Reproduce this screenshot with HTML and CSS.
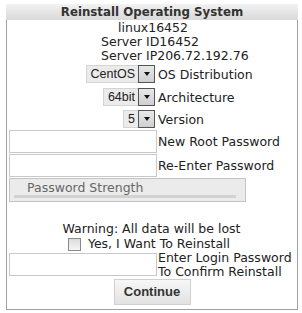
FILE: index.html
```html
<!DOCTYPE html>
<html>
<head>
<meta charset="utf-8">
<link rel="stylesheet" href="styles.css">
</head>
<body>
<div class="panel">
  <div class="panel-head">Reinstall Operating System</div>
  <div class="panel-body">
    <div class="info center">linux16452</div>
    <div class="info server">Server ID16452</div>
    <div class="info server">Server IP206.72.192.76</div>

    <div class="form-grid">
      <div class="cell-r"><span class="select"><span class="sel-text">CentOS</span><span class="sel-btn"><span class="arrow"></span></span></span></div>
      <div class="lbl">OS Distribution</div>

      <div class="cell-r"><span class="select"><span class="sel-text">64bit</span><span class="sel-btn"><span class="arrow"></span></span></span></div>
      <div class="lbl">Architecture</div>

      <div class="cell-r"><span class="select"><span class="sel-text">5</span><span class="sel-btn"><span class="arrow"></span></span></span></div>
      <div class="lbl">Version</div>

      <div class="cell-r"><span class="input"></span></div>
      <div class="lbl">New Root Password</div>

      <div class="cell-r"><span class="input"></span></div>
      <div class="lbl">Re-Enter Password</div>
    </div>

    <div class="strength"><span class="strength-text">Password Strength</span><span class="strength-bar"></span></div>

    <div class="warning">Warning: All data will be lost</div>
    <div class="confirm"><span class="checkbox"></span><span>Yes, I Want To Reinstall</span></div>

    <div class="login-row">
      <span class="input"></span>
      <div class="lbl-multi">Enter Login Password<br>To Confirm Reinstall</div>
    </div>

    <div class="actions"><span class="button">Continue</span></div>
  </div>
</div>
</body>
</html>
```
FILE: styles.css
```css
html, body {
  margin: 0;
  padding: 0;
  background: #fff;
}
body {
  font-family: "DejaVu Sans", Verdana, sans-serif;
  font-size: 12.5px;
  color: #222;
}
.panel {
  width: 292px;
  margin: 4px 0 0 6px;
}
.panel-head {
  height: 16px;
  line-height: 16px;
  text-align: center;
  font-weight: bold;
  font-size: 11.8px;
  color: #333;
  background: linear-gradient(#f2f2f2, #d9d9d9);
}
.panel-body {
  border: 1px solid #a0a0a0;
  border-top: none;
  padding: 1px 0 0 2px;
  height: 290px;
  box-sizing: border-box;
}
.info {
  height: 14px;
  line-height: 14px;
}
.center {
  text-align: center;
}
.server {
  padding-left: 92px;
}
.form-grid {
  display: grid;
  grid-template-columns: 148px 1fr;
  grid-template-rows: 22px 24px 20px 24px 24px;
  column-gap: 1px;
}
.cell-r {
  display: flex;
  justify-content: flex-end;
  align-items: center;
}
.lbl {
  display: flex;
  align-items: center;
  white-space: nowrap;
}
.select {
  display: flex;
  height: 18px;
  margin-right: 2px;
}
.sel-text {
  background: #ebebeb;
  border: 1px solid #d4d4d4;
  border-right: none;
  font-family: "Liberation Sans", Arial, sans-serif;
  font-size: 12.5px;
  line-height: 16px;
  padding: 0 3px 0 4px;
  color: #222;
}
.sel-btn {
  width: 15px;
  height: 16px;
  border: 1px solid #555;
  background: linear-gradient(#e8e8e8, #cfcfcf);
  display: flex;
  align-items: center;
  justify-content: center;
}
.arrow {
  width: 0;
  height: 0;
  border-left: 3.5px solid transparent;
  border-right: 3.5px solid transparent;
  border-top: 4px solid #111;
}
.input {
  display: block;
  width: 146px;
  height: 21px;
  border: 1px solid #c8c8c8;
  background: #fff;
  flex: none;
}
.strength {
  position: relative;
  width: 237px;
  height: 24px;
  border: 1px solid #c4c4c4;
  background: #ebebeb;
  margin-top: 1px;
  box-sizing: border-box;
}
.strength-text {
  display: block;
  padding-left: 17px;
  line-height: 18px;
  color: #666;
}
.strength-bar {
  position: absolute;
  left: 4px;
  right: 9px;
  bottom: 3px;
  height: 3px;
  background: #d2d2d2;
}
.warning {
  text-align: center;
  margin-top: 19px;
  line-height: 15px;
  padding-right: 3px;
}
.confirm {
  display: flex;
  justify-content: center;
  align-items: center;
  gap: 7px;
  line-height: 16px;
  padding-right: 8px;
}
.checkbox {
  width: 11px;
  height: 11px;
  border: 1px solid #8a8a8a;
  background: linear-gradient(#dcdcdc, #f6f6f6);
}
.login-row {
  display: flex;
  align-items: flex-start;
  gap: 1px;
  margin-top: 1px;
}
.lbl-multi {
  line-height: 14px;
  white-space: nowrap;
  margin-top: -2px;
}
.actions {
  display: flex;
  justify-content: center;
  padding-right: 2px;
}
.button {
  display: block;
  width: 75px;
  height: 24px;
  line-height: 24px;
  text-align: center;
  font-family: "Liberation Sans", Arial, sans-serif;
  font-weight: bold;
  font-size: 13px;
  color: #333;
  border: 1px solid #d0d0d0;
  background: linear-gradient(#f7f7f7, #e2e2e2);
}
```
